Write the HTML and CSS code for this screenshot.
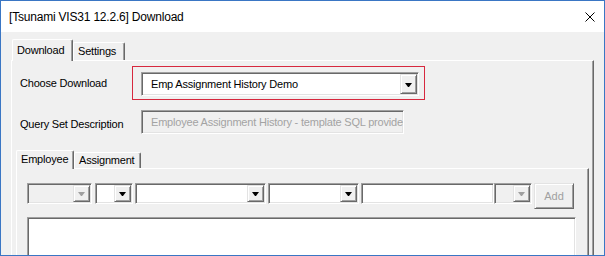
FILE: index.html
```html
<!DOCTYPE html>
<html lang="en">

<head>
    <meta charset="UTF-8">
    <meta name="viewport" content="width=device-width, initial-scale=1.0">
    <title>Download</title>
    <link rel="stylesheet" href="styles.css">
</head>

<body>
    <div class="window">
        <div class="titlebar">
            <span>[Tsunami VIS31 12.2.6] Download</span>
            <svg class="close" width="10" height="10" viewBox="0 0 10 10">
                <path d="M0.5 0.5 L9.5 9.5 M9.5 0.5 L0.5 9.5" stroke="#000" stroke-width="1" fill="none" />
            </svg>
        </div>

        <div class="client">
            <div class="tabstrip">
                <div class="tab active tab-download">Download</div>
                <div class="tab tab-settings">Settings</div>
            </div>

            <div class="panel outer">
                <div class="field-row choose-row">
                    <label class="field-label choose-label">Choose Download</label>
                    <div class="highlight">
                        <div class="combo big">
                            <span class="combo-text">Emp Assignment History Demo</span>
                            <span class="arrow-btn"><i class="tri"></i></span>
                        </div>
                    </div>
                </div>

                <div class="field-row query-row">
                    <label class="field-label query-label">Query Set Description</label>
                    <div class="textbox disabled desc">
                        <span class="combo-text">Employee Assignment History - template SQL provided</span>
                    </div>
                </div>

                <div class="tabstrip small">
                    <div class="tab active tab-employee">Employee</div>
                    <div class="tab tab-assignment">Assignment</div>
                </div>

                <div class="panel inner">
                    <div class="controls">
                        <div class="combo disabled c1"><span class="arrow-btn"><i class="tri"></i></span></div>
                        <div class="combo c2"><span class="arrow-btn"><i class="tri"></i></span></div>
                        <div class="combo c3"><span class="arrow-btn"><i class="tri"></i></span></div>
                        <div class="combo c4"><span class="arrow-btn"><i class="tri"></i></span></div>
                        <div class="textbox c5"></div>
                        <div class="combo disabled c6"><span class="arrow-btn"><i class="tri"></i></span></div>
                        <button class="add-btn" disabled>Add</button>
                    </div>
                    <div class="listbox"></div>
                </div>
            </div>
        </div>
    </div>
</body>
</html>
```

FILE: styles.css
```css
body {
    margin: 0;
    background-color: #ffffff;
    font-family: "Liberation Sans", Arial, sans-serif;
    font-size: 11px;
    letter-spacing: -0.2px;
    color: #000000;
}

.window {
    width: 605px;
    height: 256px;
    box-sizing: border-box;
    border: 1px solid #3a76c4;
    background-color: #f0f0f0;
    overflow: hidden;
    display: flex;
    flex-direction: column;
}

.titlebar {
    flex: none;
    height: 31px;
    background-color: #ffffff;
    display: flex;
    align-items: center;
    justify-content: space-between;
    padding: 0 9px 0 8px;
    font-size: 12px;
}

.close {
    display: block;
}

.client {
    flex: 1;
    padding: 7px 10px 0 10px;
    display: flex;
    flex-direction: column;
}

/* tabs */
.tabstrip {
    display: flex;
    align-items: flex-end;
    height: 21px;
    padding-left: 1px;
}

.tab {
    box-sizing: border-box;
    height: 18px;
    padding: 2px 0 0 4px;
    border-top: 1px solid #ffffff;
    border-left: 1px solid #ffffff;
    border-right: 1px solid #696969;
    box-shadow: inset -1px 0 #a0a0a0;
    border-radius: 2px 2px 0 0;
    background-color: #f0f0f0;
}

.tab.active {
    position: relative;
    z-index: 1;
    height: 22px;
    margin-bottom: -1px;
    padding-top: 4px;
}

.tab-download { width: 61px; }
.tab-settings { width: 52px; }

.tabstrip.small {
    height: 18px;
    margin-top: 16px;
    padding-left: 0;
}

.tabstrip.small .tab {
    height: 16px;
    padding-top: 1px;
}

.tabstrip.small .tab.active {
    height: 19px;
    padding-top: 2px;
}

.tab-employee { width: 58px; }
.tab-assignment { width: 67px; }

.panel {
    flex: 1;
    border-top: 1px solid #ffffff;
    border-left: 1px solid #ffffff;
    border-right: 1px solid #696969;
    box-shadow: inset -1px 0 #a0a0a0;
    display: flex;
    flex-direction: column;
}

.panel.outer {
    padding: 0 4px;
}

.panel.inner {
    padding: 14px 0 0 10px;
}

/* form rows */
.field-row {
    display: flex;
    align-items: center;
    padding-left: 4px;
}

.field-label {
    width: 121px;
    flex: none;
}

.choose-row {
    margin-top: 5px;
}

.choose-label {
    width: 112px;
}

.query-label {
    padding-top: 3px;
}

.highlight {
    border: 1px solid #d7283e;
    padding: 5px 5px 3px 8px;
}

.query-row {
    margin-top: 10px;
}

/* sunken boxes */
.combo,
.textbox,
.listbox {
    box-sizing: border-box;
    border: 1px solid;
    border-color: #a0a0a0 #ffffff #ffffff #a0a0a0;
    box-shadow: inset 1px 1px #696969, inset -1px -1px #e3e3e3;
    background-color: #ffffff;
    display: flex;
    align-items: center;
    flex: none;
    overflow: hidden;
}

.combo.disabled,
.textbox.disabled {
    background-color: #f0f0f0;
    color: #a3a3a3;
}

.combo-text {
    padding-left: 9px;
    white-space: nowrap;
}

.combo.big {
    width: 278px;
    height: 24px;
}

.textbox.desc {
    width: 263px;
    height: 24px;
}

.arrow-btn {
    margin-left: auto;
    margin-right: 1px;
    align-self: stretch;
    margin-top: 1px;
    margin-bottom: 1px;
    width: 17px;
    box-sizing: border-box;
    border: 1px solid;
    border-color: #e3e3e3 #696969 #696969 #e3e3e3;
    box-shadow: inset 1px 1px #ffffff, inset -1px -1px #a0a0a0;
    background-color: #f0f0f0;
    display: flex;
    align-items: center;
    justify-content: center;
}

.tri {
    width: 1px;
    height: 0;
    border-left: 3px solid transparent;
    border-right: 3px solid transparent;
    border-top: 4px solid #000000;
    margin-top: 1px;
}

.disabled .tri {
    border-top-color: #a0a0a0;
}

/* control row */
.controls {
    display: flex;
    align-items: flex-start;
}

.controls .combo,
.controls .textbox {
    height: 21px;
}

.c1 { width: 65px; margin-right: 3px; }
.c2 { width: 38px; margin-right: 2px; }
.c3 { width: 131px; margin-right: 2px; }
.c4 { width: 91px; margin-right: 2px; }
.c5 { width: 133px; }
.c6 { width: 38px; margin-right: 2px; }

.add-btn {
    width: 40px;
    height: 26px;
    box-sizing: border-box;
    border: 1px solid;
    border-color: #e3e3e3 #696969 #696969 #e3e3e3;
    box-shadow: inset 1px 1px #ffffff, inset -1px -1px #a0a0a0;
    background-color: #f0f0f0;
    color: #a0a0a0;
    font-family: "Liberation Sans", Arial, sans-serif;
    font-size: 11px;
    padding: 0;
}

.listbox {
    width: 549px;
    height: 60px;
    margin-top: 8px;
}
```
